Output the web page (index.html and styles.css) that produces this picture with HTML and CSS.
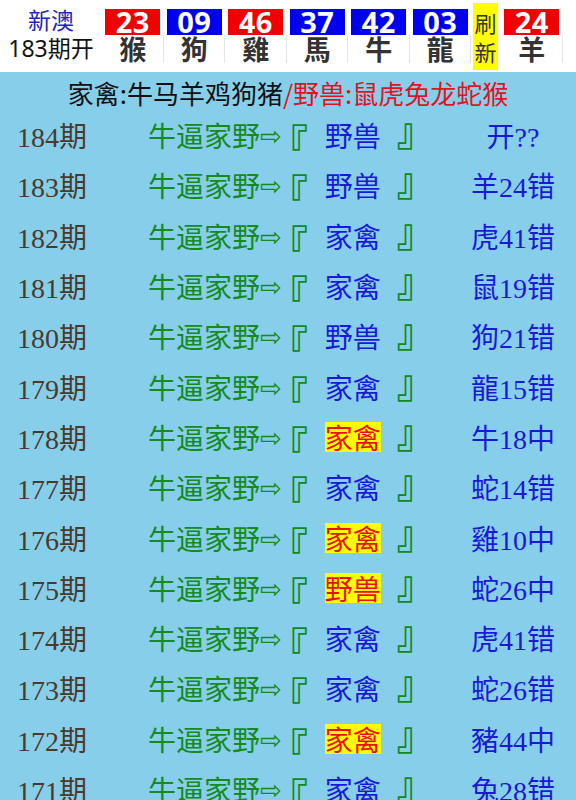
FILE: index.html
```html
<!DOCTYPE html>
<html lang="zh">
<head>
<meta charset="utf-8">
<link rel="stylesheet" href="styles.css">
</head>
<body>
<div class="top">
  <div class="issue"><div class="site">新澳</div><div class="draw">183期开</div></div>
  <div class="ball"><div class="num red">23</div><div class="zod">猴</div></div>
  <div class="ball"><div class="num blue">09</div><div class="zod">狗</div></div>
  <div class="ball"><div class="num red">46</div><div class="zod">雞</div></div>
  <div class="ball"><div class="num blue">37</div><div class="zod">馬</div></div>
  <div class="ball"><div class="num blue">42</div><div class="zod">牛</div></div>
  <div class="ball"><div class="num blue">03</div><div class="zod">龍</div></div>
  <div class="refresh"><span>刷</span><span>新</span></div>
  <div class="ball"><div class="num red">24</div><div class="zod">羊</div></div>
</div>
<div class="board">
  <div class="legend"><span class="home">家禽:牛马羊鸡狗猪</span><span class="wild">/野兽:鼠虎兔龙蛇猴</span></div>
  <div class="row"><div class="period">184期</div><div class="tip"><span class="lead">牛逼家野<span class="arrow">⇨</span></span><span class="bk open">『</span><span class="pick">野兽</span><span class="bk close">』</span></div><div class="res">开??</div></div>
  <div class="row"><div class="period">183期</div><div class="tip"><span class="lead">牛逼家野<span class="arrow">⇨</span></span><span class="bk open">『</span><span class="pick">野兽</span><span class="bk close">』</span></div><div class="res">羊24错</div></div>
  <div class="row"><div class="period">182期</div><div class="tip"><span class="lead">牛逼家野<span class="arrow">⇨</span></span><span class="bk open">『</span><span class="pick">家禽</span><span class="bk close">』</span></div><div class="res">虎41错</div></div>
  <div class="row"><div class="period">181期</div><div class="tip"><span class="lead">牛逼家野<span class="arrow">⇨</span></span><span class="bk open">『</span><span class="pick">家禽</span><span class="bk close">』</span></div><div class="res">鼠19错</div></div>
  <div class="row"><div class="period">180期</div><div class="tip"><span class="lead">牛逼家野<span class="arrow">⇨</span></span><span class="bk open">『</span><span class="pick">野兽</span><span class="bk close">』</span></div><div class="res">狗21错</div></div>
  <div class="row"><div class="period">179期</div><div class="tip"><span class="lead">牛逼家野<span class="arrow">⇨</span></span><span class="bk open">『</span><span class="pick">家禽</span><span class="bk close">』</span></div><div class="res">龍15错</div></div>
  <div class="row"><div class="period">178期</div><div class="tip"><span class="lead">牛逼家野<span class="arrow">⇨</span></span><span class="bk open">『</span><span class="pick hit">家禽</span><span class="bk close">』</span></div><div class="res">牛18中</div></div>
  <div class="row"><div class="period">177期</div><div class="tip"><span class="lead">牛逼家野<span class="arrow">⇨</span></span><span class="bk open">『</span><span class="pick">家禽</span><span class="bk close">』</span></div><div class="res">蛇14错</div></div>
  <div class="row"><div class="period">176期</div><div class="tip"><span class="lead">牛逼家野<span class="arrow">⇨</span></span><span class="bk open">『</span><span class="pick hit">家禽</span><span class="bk close">』</span></div><div class="res">雞10中</div></div>
  <div class="row"><div class="period">175期</div><div class="tip"><span class="lead">牛逼家野<span class="arrow">⇨</span></span><span class="bk open">『</span><span class="pick hit">野兽</span><span class="bk close">』</span></div><div class="res">蛇26中</div></div>
  <div class="row"><div class="period">174期</div><div class="tip"><span class="lead">牛逼家野<span class="arrow">⇨</span></span><span class="bk open">『</span><span class="pick">家禽</span><span class="bk close">』</span></div><div class="res">虎41错</div></div>
  <div class="row"><div class="period">173期</div><div class="tip"><span class="lead">牛逼家野<span class="arrow">⇨</span></span><span class="bk open">『</span><span class="pick">家禽</span><span class="bk close">』</span></div><div class="res">蛇26错</div></div>
  <div class="row"><div class="period">172期</div><div class="tip"><span class="lead">牛逼家野<span class="arrow">⇨</span></span><span class="bk open">『</span><span class="pick hit">家禽</span><span class="bk close">』</span></div><div class="res">豬44中</div></div>
  <div class="row"><div class="period">171期</div><div class="tip"><span class="lead">牛逼家野<span class="arrow">⇨</span></span><span class="bk open">『</span><span class="pick">家禽</span><span class="bk close">』</span></div><div class="res">兔28错</div></div>
</div>
</body>
</html>
```

FILE: styles.css
```css
html, body {
  margin: 0;
  padding: 0;
  background: #ffffff;
}

body {
  width: 576px;
  overflow: hidden;
  font-family: "Noto Sans", "Noto Sans CJK SC", sans-serif;
}

.top {
  display: flex;
  height: 72px;
  background: #ffffff;
}

.issue {
  width: 102px;
  display: flex;
  flex-direction: column;
  align-items: center;
  font-family: "Noto Sans", "Noto Sans CJK SC", sans-serif;
  font-size: 23px;
}

.site {
  color: #2525b0;
  height: 34px;
  line-height: 40px;
}

.draw {
  color: #111111;
  line-height: 28px;
}

.ball {
  width: 61.5px;
  display: flex;
  flex-direction: column;
  align-items: center;
}

.num {
  margin-top: 9px;
  width: 55px;
  height: 26px;
  line-height: 26px;
  text-align: center;
  color: #ffffff;
  font-weight: 700;
  font-size: 29px;
  font-family: "Noto Sans", "Open Sans", sans-serif;
  letter-spacing: 0.5px;
}

.red { background: #f00000; }
.blue { background: #0000f0; }

.zod {
  width: 100%;
  box-sizing: border-box;
  height: 28px;
  line-height: 28px;
  text-align: center;
  font-size: 27px;
  font-weight: 700;
  color: #333333;
  font-family: "Noto Sans CJK SC", sans-serif;
  border-right: 1px solid #e4e4e4;
  border-left: 1px solid #ffffff;
}

.refresh {
  width: 25px;
  margin: 3px 3px 2px 2px;
  background: #ffff00;
  display: flex;
  flex-direction: column;
  align-items: center;
  justify-content: center;
  gap: 2px;
  font-size: 22px;
  line-height: 27px;
  color: #333333;
  font-family: "Noto Sans CJK SC", sans-serif;
}

.board {
  background: #87ceeb;
  min-height: 760px;
}

.legend {
  height: 38px;
  line-height: 42px;
  text-align: center;
  font-size: 26px;
  font-family: "Noto Sans CJK SC", sans-serif;
}

.home { color: #111111; }
.wild { color: #e0141e; }

.row {
  display: grid;
  grid-template-columns: 104px 346px 126px;
  align-items: center;
  height: 50.3px;
  font-size: 28px;
  font-family: "Liberation Serif", "Noto Sans CJK SC", serif;
}

.period {
  text-align: center;
  color: #4a3a2c;
}

.tip {
  display: flex;
  justify-content: flex-start;
  align-items: center;
  padding-left: 44px;
}

.lead {
  color: #158a1e;
  font-family: "Noto Sans CJK SC", "DejaVu Sans", sans-serif;
}

.arrow {
  font-family: "DejaVu Sans", sans-serif;
  font-size: 26px;
  vertical-align: 2px;
}

.bk {
  color: #0f8a22;
  font-weight: 700;
  font-size: 38px;
  line-height: 30px;
  height: 30px;
  font-family: "Noto Sans CJK SC", sans-serif;
}

.bk.open {
  margin-left: -12px;
  margin-top: 12px;
}

.bk.close {
  margin-bottom: 12px;
}

.pick {
  color: #1a1ad6;
  margin: 0 16px 0 17px;
  font-family: "Noto Sans CJK SC", sans-serif;
  line-height: 30px;
}

.pick.hit {
  background: #ffff00;
  color: #e81010;
}

.res {
  text-align: center;
  color: #1a1ad6;
}
```
